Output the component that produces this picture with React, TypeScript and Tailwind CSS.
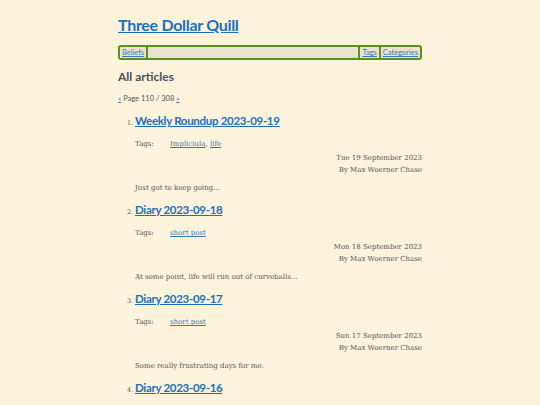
import React from "react";

const items = [
  { n: 1, title: "Weekly Roundup 2023-09-19", tags: ["Impliciula", "life"], date: "Tue 19 September 2023", summary: "Just got to keep going..." },
  { n: 2, title: "Diary 2023-09-18", tags: ["short post"], date: "Mon 18 September 2023", summary: "At some point, life will run out of curveballs..." },
  { n: 3, title: "Diary 2023-09-17", tags: ["short post"], date: "Sun 17 September 2023", summary: "Some really frustrating days for me." },
  { n: 4, title: "Diary 2023-09-16", tags: [] as string[], date: "", summary: "" },
];

const head = { fontFamily: "Lato, 'Open Sans', sans-serif" };
const body = { fontFamily: "'DejaVu Serif', 'Liberation Serif', serif" };

export default function App() {
  return (
    <div className="w-full bg-[#fbf3dc] overflow-hidden h-[405px]">
      <div className="mx-auto w-[304px] pt-[15px]">
        <h1 className="text-[16px] leading-[20px] font-bold tracking-[-0.3px] text-[#1d6fc0] underline" style={head}>
          Three Dollar Quill
        </h1>
        <nav className="mt-[10px] flex h-[15px] items-stretch rounded-[3px] border-2 border-[#5e8f1b] bg-[#ebe3cf] text-[7.5px]" style={head}>
          <a className="px-[2px] leading-[11px] text-[#3a79b8] underline">Beliefs</a>
          <div className="flex-1 border-x-2 border-[#5e8f1b]" />
          <a className="px-[2px] leading-[11px] text-[#3a79b8] underline border-r-2 border-[#5e8f1b]">Tags</a>
          <a className="px-[2px] leading-[11px] text-[#3a79b8] underline">Categories</a>
        </nav>
        <h2 className="mt-[10px] text-[12px] leading-[14px] font-bold text-[#4b5259]" style={head}>All articles</h2>
        <p className="mt-[10px] text-[7.5px] leading-[10px] text-[#555]" style={head}>
          <a className="text-[#3a79b8] underline">«</a> Page 110 / 308 <a className="text-[#3a79b8] underline">»</a>
        </p>
        <ol className="mt-[9px] pl-[17px]">
          {items.map((it) => (
            <li key={it.n} className="h-[89px]">
              <div className="flex items-baseline">
                <span className="w-[0px] -ml-[7px] mr-[7px] text-[6.5px] text-[#555]" style={body}>
                  <span className="inline-block -translate-x-[1px]">{it.n}.</span>
                </span>
                <a className="text-[11.5px] leading-[16px] font-bold tracking-[-0.3px] text-[#1d6fc0] underline" style={head}>{it.title}</a>
              </div>
              {it.date && (
                <>
                  <div className="mt-[10px] flex text-[7px] leading-[10px] text-[#555]" style={body}>
                    <span className="w-[35px]">Tags:</span>
                    <span>
                      {it.tags.map((t, i) => (
                        <React.Fragment key={t}>
                          {i > 0 && ", "}
                          <a className="text-[#3a79b8] underline">{t}</a>
                        </React.Fragment>
                      ))}
                    </span>
                  </div>
                  <div className="mt-[3px] text-right text-[7px] leading-[12px] text-[#555]" style={body}>
                    <div>{it.date}</div>
                    <div>By Max Woerner Chase</div>
                  </div>
                  <p className="mt-[7px] text-[7px] leading-[10px] text-[#555]" style={body}>{it.summary}</p>
                </>
              )}
            </li>
          ))}
        </ol>
      </div>
    </div>
  );
}
